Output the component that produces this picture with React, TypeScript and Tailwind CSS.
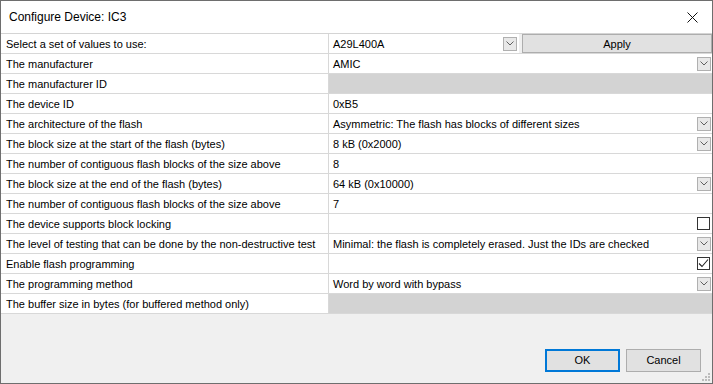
import React from "react";

type Row = {
  label: string;
  value?: string;
  kind: "text" | "combo" | "disabled" | "check" | "checked" | "select";
};

const rows: Row[] = [
  { label: "Select a set of values to use:", value: "A29L400A", kind: "select" },
  { label: "The manufacturer", value: "AMIC", kind: "combo" },
  { label: "The manufacturer ID", kind: "disabled" },
  { label: "The device ID", value: "0xB5", kind: "text" },
  { label: "The architecture of the flash", value: "Asymmetric: The flash has blocks of different sizes", kind: "combo" },
  { label: "The block size at the start of the flash (bytes)", value: "8 kB (0x2000)", kind: "combo" },
  { label: "The number of contiguous flash blocks of the size above", value: "8", kind: "text" },
  { label: "The block size at the end of the flash (bytes)", value: "64 kB (0x10000)", kind: "combo" },
  { label: "The number of contiguous flash blocks of the size above", value: "7", kind: "text" },
  { label: "The device supports block locking", kind: "check" },
  { label: "The level of testing that can be done by the non-destructive test", value: "Minimal: the flash is completely erased. Just the IDs are checked", kind: "combo" },
  { label: "Enable flash programming", kind: "checked" },
  { label: "The programming method", value: "Word by word with bypass", kind: "combo" },
  { label: "The buffer size in bytes (for buffered method only)", kind: "disabled" },
];

function Arrow() {
  return (
    <div className="w-[14px] h-[14px] border border-[#b0b0b0] bg-[#e8e8e8] flex items-center justify-center">
      <svg width="8" height="5" viewBox="0 0 8 5">
        <path d="M0.5 0.5 L4 4 L7.5 0.5" fill="none" stroke="#606060" strokeWidth="1" />
      </svg>
    </div>
  );
}

function ValueCell({ row }: { row: Row }) {
  if (row.kind === "disabled") {
    return <div className="flex-1 h-full bg-[#d3d3d3]" />;
  }
  if (row.kind === "select") {
    return (
      <div className="flex-1 h-full flex items-center">
        <div className="w-[190px] h-full flex items-center bg-white pl-[4px] pr-[2px]">
          <span className="flex-1 pt-[1px]">{row.value}</span>
          <Arrow />
        </div>
        <div className="flex-1 h-full ml-[3px] bg-[#e1e1e1] border border-[#adadad] flex items-center justify-center pt-[1px]">
          Apply
        </div>
      </div>
    );
  }
  return (
    <div className="flex-1 h-full flex items-center bg-white pl-[4px] pr-[1px]">
      <span className="flex-1 whitespace-nowrap pt-[1px]">{row.value ?? ""}</span>
      {row.kind === "combo" && <Arrow />}
      {row.kind === "check" && <div className="w-[13px] h-[13px] border border-[#333333] bg-white mr-[1px]" />}
      {row.kind === "checked" && (
        <div className="w-[13px] h-[13px] border border-[#333333] bg-white mr-[1px] flex items-center justify-center">
          <svg width="11" height="11" viewBox="0 0 11 11">
            <path d="M1 5.5 L4 8.5 L10 1.5" fill="none" stroke="#222222" strokeWidth="1.1" />
          </svg>
        </div>
      )}
    </div>
  );
}

export default function App() {
  return (
    <div
      className="w-[713px] h-[384px] border border-[#6e6e6e] bg-[#f0f0f0] flex flex-col text-[11px] text-black"
      style={{ fontFamily: '"Liberation Sans", Arial, sans-serif' }}
    >
      <div className="h-[32px] bg-white flex items-center pl-[8px] pr-[14px]">
        <span className="flex-1 text-[12px]">Configure Device: IC3</span>
        <svg width="11" height="11" viewBox="0 0 11 11">
          <path d="M0.5 0.5 L10.5 10.5 M10.5 0.5 L0.5 10.5" stroke="#111111" strokeWidth="1" />
        </svg>
      </div>
      <div className="border-t border-[#d4d4d4] flex flex-col">
        {rows.map((r, i) => (
          <div key={i} className="h-[20px] flex border-b border-[#d8d8d8]">
            <div className="w-[328px] border-r border-[#d8d8d8] bg-white flex items-center pl-[5px] pt-[1px] whitespace-nowrap">
              {r.label}
            </div>
            <ValueCell row={r} />
          </div>
        ))}
      </div>
      <div className="flex-1" />
      <div className="flex justify-end gap-[6px] pr-[11px] pb-[11px] relative">
        <div className="w-[75px] h-[23px] bg-[#e1e1e1] border-2 border-[#0078d7] flex items-center justify-center">OK</div>
        <div className="w-[75px] h-[23px] bg-[#e1e1e1] border border-[#adadad] flex items-center justify-center">Cancel</div>
        <svg className="absolute right-[1px] bottom-[1px]" width="10" height="10" viewBox="0 0 10 10">
          <rect x="7" y="1" width="2" height="2" fill="#bcbcbc" />
          <rect x="4" y="4" width="2" height="2" fill="#bcbcbc" />
          <rect x="7" y="4" width="2" height="2" fill="#bcbcbc" />
          <rect x="1" y="7" width="2" height="2" fill="#bcbcbc" />
          <rect x="4" y="7" width="2" height="2" fill="#bcbcbc" />
          <rect x="7" y="7" width="2" height="2" fill="#bcbcbc" />
        </svg>
      </div>
    </div>
  );
}
